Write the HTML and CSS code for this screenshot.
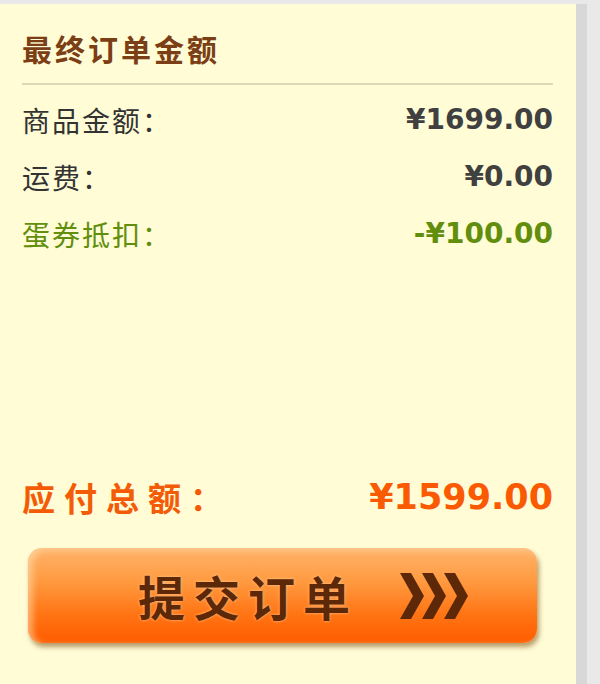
FILE: index.html
```html
<!DOCTYPE html>
<html lang="zh-CN">
<head>
    <meta charset="UTF-8">
    <meta name="viewport" content="width=device-width, initial-scale=1.0">
    <title>最终订单金额</title>
    <link rel="stylesheet" href="styles.css">
</head>
<body>
    <div class="panel">
        <div class="summary">
            <h2 class="title">最终订单金额</h2>
            <div class="row">
                <span class="label">商品金额：</span>
                <span class="value">¥1699.00</span>
            </div>
            <div class="row">
                <span class="label">运费：</span>
                <span class="value">¥0.00</span>
            </div>
            <div class="row discount">
                <span class="label">蛋券抵扣：</span>
                <span class="value">-¥100.00</span>
            </div>
        </div>

        <div class="checkout">
            <div class="total">
                <span class="total-label">应付总额：</span>
                <span class="total-value">¥1599.00</span>
            </div>
            <button type="button" class="submit-btn">
                <span class="submit-text">提交订单</span>
                <svg class="chevrons" width="70" height="46" viewBox="0 0 70 46">
                    <polygon points="0,0 11,0 24,23 11,46 0,46 13,23" />
                    <polygon points="22,0 33,0 46,23 33,46 22,46 35,23" />
                    <polygon points="44,0 55,0 68,23 55,46 44,46 57,23" />
                </svg>
            </button>
        </div>
    </div>
</body>
</html>
```

FILE: styles.css
```css
body {
    margin: 0;
    background-color: #e9e9e9;
    font-family: "Noto Sans CJK SC", "DejaVu Sans", sans-serif;
}

.panel {
    width: 587px;
    height: 680px;
    margin-top: 4px;
    padding: 0 23px 41px 22px;
    box-sizing: border-box;
    background-color: #fffcd6;
    border-right: 11px solid #d8d8d8;
    display: flex;
    flex-direction: column;
}

.title {
    margin: 0;
    padding: 24px 0 15px;
    font-size: 30px;
    line-height: 40px;
    letter-spacing: 3px;
    font-weight: bold;
    color: #7b3e15;
    border-bottom: 2px solid #ddd8b8;
}

.row {
    display: flex;
    justify-content: space-between;
    align-items: center;
    height: 57px;
}

.row:first-of-type {
    margin-top: 6px;
}

.label {
    font-size: 28px;
    letter-spacing: 2px;
    color: #333;
}

.value {
    font-family: "DejaVu Sans", Verdana, sans-serif;
    font-size: 28px;
    font-weight: bold;
    color: #404040;
}

.discount .label,
.discount .value {
    color: #628e0e;
}

.checkout {
    margin-top: auto;
}

.total {
    display: flex;
    justify-content: space-between;
    align-items: center;
    height: 50px;
    margin-bottom: 26px;
}

.total-label {
    font-size: 33px;
    font-weight: bold;
    letter-spacing: 9px;
    color: #f35b06;
}

.total-value {
    font-family: "DejaVu Sans", Verdana, sans-serif;
    font-size: 35px;
    font-weight: bold;
    color: #fa5a02;
}

.submit-btn {
    display: flex;
    align-items: center;
    width: 509px;
    height: 95px;
    margin-left: 6px;
    padding: 0 0 0 110px;
    border: none;
    border-radius: 14px;
    background: linear-gradient(to bottom, #ffb46c 0%, #ff9a40 35%, #ff7414 70%, #ff5c00 100%);
    box-shadow: inset 5px 2px 6px rgba(255, 225, 180, 0.55), 2px 4px 5px rgba(125, 75, 15, 0.55);
    cursor: pointer;
    font-family: "Noto Sans CJK SC", sans-serif;
}

.submit-text {
    font-size: 47px;
    font-weight: bold;
    letter-spacing: 8px;
    color: #5c2808;
    text-shadow: 0 0 3px #ffc890;
}

.chevrons {
    margin-left: 42px;
    fill: #5c2808;
}
```
